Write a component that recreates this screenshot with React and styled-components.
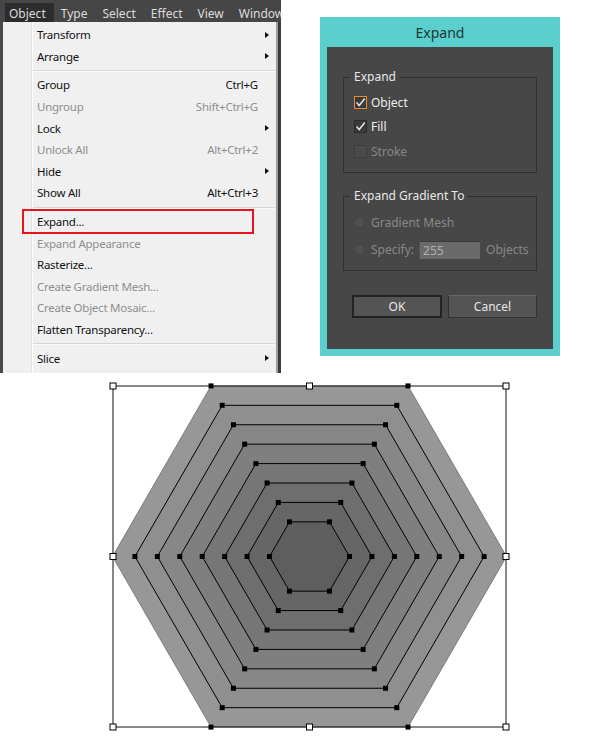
import React from "react";
import styled, { createGlobalStyle } from "styled-components";

const GlobalStyle = createGlobalStyle`
  html, body {
    margin: 0;
    padding: 0;
    background: #fff;
  }
  body {
    font-family: "Noto Sans", "Open Sans", sans-serif;
  }
`;

const menuBar = ["Object", "Type", "Select", "Effect", "View", "Window"];

const menuGroups = [
  [
    { label: "Transform", arrow: true },
    { label: "Arrange", arrow: true },
  ],
  [
    { label: "Group", shortcut: "Ctrl+G" },
    { label: "Ungroup", shortcut: "Shift+Ctrl+G", disabled: true },
    { label: "Lock", arrow: true },
    { label: "Unlock All", shortcut: "Alt+Ctrl+2", disabled: true },
    { label: "Hide", arrow: true },
    { label: "Show All", shortcut: "Alt+Ctrl+3" },
  ],
  [
    { label: "Expand...", marked: true },
    { label: "Expand Appearance", disabled: true },
    { label: "Rasterize..." },
    { label: "Create Gradient Mesh...", disabled: true },
    { label: "Create Object Mosaic...", disabled: true },
    { label: "Flatten Transparency..." },
  ],
  [{ label: "Slice", arrow: true }],
];

// hexagon rings, outer to inner
const CX = 309.5;
const CY = 556.5;
const OUTER_R = 197;
const INNER_R = 40;
const RINGS = 8;

function hexPoints(r) {
  const h = (r * Math.sqrt(3)) / 2;
  return [
    [CX - r, CY],
    [CX - r / 2, CY - h],
    [CX + r / 2, CY - h],
    [CX + r, CY],
    [CX + r / 2, CY + h],
    [CX - r / 2, CY + h],
  ];
}

function ringColor(i) {
  const from = 0x97;
  const to = 0x5e;
  const v = Math.round(from + ((to - from) * i) / (RINGS - 1));
  return `rgb(${v},${v},${v})`;
}

function Check({ color }) {
  return (
    <svg width="11" height="11" viewBox="0 0 11 11">
      <polyline points="1.5,5.5 4.2,8.5 9.8,1.5" fill="none" stroke={color} strokeWidth="1.5" />
    </svg>
  );
}

function Hexagon() {
  const rings = [];
  for (let i = 0; i < RINGS; i++) {
    const r = OUTER_R - ((OUTER_R - INNER_R) * i) / (RINGS - 1);
    rings.push({ r, pts: hexPoints(r), i });
  }
  const handles = [
    [113, 386], [CX, 386], [506, 386],
    [113, CY], [506, CY],
    [113, 727], [CX, 727], [506, 727],
  ];
  return (
    <Art viewBox="0 375 590 367" width="590" height="367">
      {rings.map(({ pts, i }) => (
        <polygon
          key={i}
          points={pts.map((p) => p.join(",")).join(" ")}
          fill={ringColor(i)}
          stroke={i === 0 ? "#6a6a6a" : "#000"}
          strokeWidth={i === 0 ? 0.8 : 1}
        />
      ))}
      <rect x="113" y="386" width="393" height="341" fill="none" stroke="#111" strokeWidth="1" />
      {rings.map(({ pts, i }) =>
        pts.map((p, k) => (
          <rect key={`${i}-${k}`} x={p[0] - 2.5} y={p[1] - 2.5} width="5" height="5" fill="#000" />
        ))
      )}
      {handles.map((p, k) => (
        <rect key={k} x={p[0] - 3} y={p[1] - 3} width="6" height="6" fill="#fff" stroke="#000" strokeWidth="1" />
      ))}
    </Art>
  );
}

export default function App() {
  return (
    <>
      <GlobalStyle />
      <Page>
        <Top>
          <Screen>
            <MenuBar>
              {menuBar.map((m, i) => (
                <BarItem key={m} $active={i === 0}>{m}</BarItem>
              ))}
            </MenuBar>
            <DropArea>
              <Strip />
              <Panel>
                {menuGroups.map((group, gi) => (
                  <React.Fragment key={gi}>
                    {gi > 0 && <Separator />}
                    {group.map((it) => (
                      <Row key={it.label} $disabled={it.disabled}>
                        <span>{it.label}</span>
                        <Shortcut>{it.shortcut}</Shortcut>
                        <ArrowCell>{it.arrow && <Arrow />}</ArrowCell>
                        {it.marked && <RedBox />}
                      </Row>
                    ))}
                  </React.Fragment>
                ))}
              </Panel>
            </DropArea>
          </Screen>

          <Dialog>
            <Title>Expand</Title>
            <Body>
              <Group $height={96} $pad={12}>
                <Legend>Expand</Legend>
                <OptionRow>
                  <CheckBox $focus>
                    <Check color="#e6e6e6" />
                  </CheckBox>
                  Object
                </OptionRow>
                <OptionRow>
                  <CheckBox>
                    <Check color="#e6e6e6" />
                  </CheckBox>
                  Fill
                </OptionRow>
                <OptionRow $disabled>
                  <CheckBox $disabled />
                  Stroke
                </OptionRow>
              </Group>
              <Group $height={75} $pad={13} $top={23}>
                <Legend>Expand Gradient To</Legend>
                <OptionRow $disabled>
                  <Radio />
                  Gradient Mesh
                </OptionRow>
                <OptionRow $disabled>
                  <Radio />
                  Specify:
                  <NumberBox>255</NumberBox>
                  <Unit>Objects</Unit>
                </OptionRow>
              </Group>
              <Buttons>
                <Button $default $w={90}>OK</Button>
                <Button $w={89}>Cancel</Button>
              </Buttons>
            </Body>
          </Dialog>
        </Top>
        <Hexagon />
      </Page>
    </>
  );
}

const Page = styled.div`
  width: 590px;
  height: 742px;
  overflow: hidden;
  background: #fff;
`;

const Top = styled.div`
  display: flex;
  height: 375px;
`;

const Screen = styled.div`
  width: 281px;
  height: 373px;
  display: flex;
  flex-direction: column;
  background: #3b3b3b;
`;

const MenuBar = styled.div`
  height: 22px;
  display: flex;
  gap: 3px;
  padding-left: 5px;
  background: #464646;
  overflow: hidden;
  white-space: nowrap;
`;

const BarItem = styled.div`
  padding: 3px 8px 0 4px;
  margin-top: 3px;
  font-size: 12px;
  line-height: 15px;
  color: #dcdcdc;
  background: ${(p) => (p.$active ? "#2c2c2c" : "transparent")};
`;

const DropArea = styled.div`
  flex: 1;
  display: flex;
`;

const Strip = styled.div`
  width: 3px;
  background: #4a4a4a;
`;

const Panel = styled.div`
  width: 273px;
  padding-top: 2px;
  border-right: 2px solid #9c9c9c;
  background: linear-gradient(
    to right,
    #f0f0f0 0 28px,
    #e2e2e2 28px 29px,
    #fdfdfd 29px 30px,
    #f0f0f0 30px
  );
`;

const Row = styled.div`
  position: relative;
  height: 21.6px;
  display: grid;
  grid-template-columns: 1fr auto 18px;
  align-items: center;
  padding: 0 0 0 34px;
  font-size: 11.5px;
  letter-spacing: -0.25px;
  color: ${(p) => (p.$disabled ? "#8e8e8e" : "#111")};
  white-space: nowrap;
`;

const Shortcut = styled.span`
  text-align: right;
`;

const ArrowCell = styled.span`
  display: flex;
  align-items: center;
  padding-left: 7px;
`;

const Arrow = styled.span`
  width: 0;
  height: 0;
  border-left: 4px solid #111;
  border-top: 3.5px solid transparent;
  border-bottom: 3.5px solid transparent;
`;

const RedBox = styled.span`
  position: absolute;
  left: 19px;
  top: -2.2px;
  width: 232px;
  height: 25px;
  box-sizing: border-box;
  border: 2px solid #e8131c;
`;

const Separator = styled.div`
  height: 1px;
  margin: 3px 1px 3px 30px;
  background: #d6d6d6;
  box-shadow: 0 1px 0 #fbfbfb;
`;

const Dialog = styled.div`
  margin: 17px 0 0 39px;
  width: 240px;
  height: 339px;
  box-sizing: border-box;
  padding: 0 7px 7px;
  background: #5bcece;
  display: flex;
  flex-direction: column;
`;

const Title = styled.div`
  height: 30px;
  line-height: 31px;
  text-align: center;
  font-size: 14px;
  color: #1c3838;
`;

const Body = styled.div`
  flex: 1;
  background: #474747;
  padding: 30px 16px 0;
  font-size: 12px;
  color: #ececec;
`;

const Group = styled.div`
  position: relative;
  box-sizing: border-box;
  height: ${(p) => p.$height}px;
  margin-top: ${(p) => p.$top || 0}px;
  padding: ${(p) => p.$pad}px 0 0 10px;
  border: 1px solid #303030;
  display: flex;
  flex-direction: column;
  gap: ${(p) => (p.$pad === 13 ? 3 : 0)}px;
`;

const Legend = styled.div`
  position: absolute;
  top: -9px;
  left: 6px;
  padding: 0 4px;
  line-height: 16px;
  background: #474747;
  color: #e8e8e8;
`;

const OptionRow = styled.div`
  height: 24.5px;
  display: flex;
  align-items: center;
  color: ${(p) => (p.$disabled ? "#878787" : "#eeeeee")};
`;

const CheckBox = styled.span`
  width: 13px;
  height: 13px;
  box-sizing: border-box;
  margin-right: 4px;
  display: flex;
  align-items: center;
  justify-content: center;
  border: 1px solid ${(p) => (p.$focus ? "#e98a2c" : p.$disabled ? "#3d3d3d" : "#2b2b2b")};
  background: ${(p) => (p.$disabled ? "#4b4b4b" : "#3a3a3a")};
`;

const Radio = styled.span`
  width: 11px;
  height: 11px;
  box-sizing: border-box;
  margin-right: 6px;
  border-radius: 50%;
  border: 1px solid #434343;
  background: #515151;
`;

const NumberBox = styled.span`
  width: 61px;
  height: 18px;
  box-sizing: border-box;
  margin-left: 5px;
  padding-left: 3px;
  line-height: 17px;
  background: #6a6a6a;
  border-top: 1px solid #3a3a3a;
  border-left: 1px solid #545454;
  color: #b0b0b0;
`;

const Unit = styled.span`
  margin-left: 6px;
`;

const Buttons = styled.div`
  display: flex;
  gap: 6px;
  margin: 24px 0 0 9px;
`;

const Button = styled.div`
  width: ${(p) => p.$w}px;
  height: 23px;
  box-sizing: border-box;
  display: flex;
  align-items: center;
  justify-content: center;
  background: #545454;
  border: ${(p) => (p.$default ? "2px solid #232323" : "1px solid #333")};
  border-top-color: ${(p) => (p.$default ? "#232323" : "#666")};
  color: #e6e6e6;
  font-size: 12px;
`;

const Art = styled.svg`
  display: block;
`;
